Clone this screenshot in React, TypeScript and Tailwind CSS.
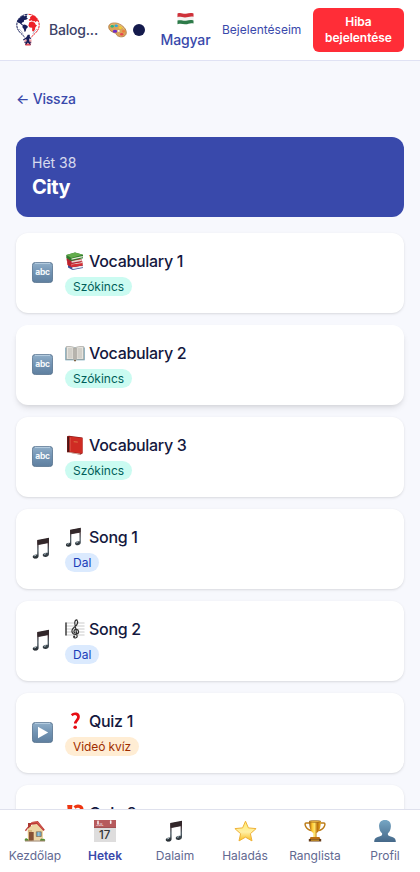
import React from "react";

type IconProps = { className?: string };

function Logo() {
  return (
    <svg className="h-[34px] w-6 shrink-0" viewBox="0 0 24 34">
      <path d="M11.500 1.300C5.500 1.500.8 6 .8 12c0 3.500 1.600 6 4.200 8.500L8.600 24" fill="none" stroke="#18205a" strokeWidth="1" strokeDasharray="2.400 .5" />
      <path d="M12.500 1.300C18.500 1.500 23.200 6 23.200 12c0 3.500-1.600 6-4.200 8.500L15.400 24" fill="none" stroke="#ed2028" strokeWidth="1" strokeDasharray="2.400 .5" />
      <path d="M3.300 5.200 6.500 2.800l2.200.4 1.100-1 1.400.5-.6 1.800 1.300 1-1.800 1.300-1.900.1-.5 2-1.600.5-.5 1.400 1.800 1.200-1.300.3-2.300-2-1.900-.7-.5-2.200Z" fill="#18205a" />
      <path d="m6.600 11.900 2.200-.5 2.400 1.300.8 1.200-1.700 1.800-.6 2.600-1.100.7-.8-3-1.400-1.700Z" fill="#18205a" />
      <path d="m14.100 4.100 2-1.600 2.200.2 2.500 2.300 1.500 3.500-1.700-.5-.7 1.200-1.600-1.300-1.300.6-1.300-1.200-2 .6-1.100-1.100 1.600-1Z" fill="#ed2028" />
      <path d="m13.300 9.200 2.700-.6 2.800 1.200 1.100 2.200 1.200.2-1.800 2.400-.5 2.500-1.700 1.700-1-1.400.1-2.700-2.500-.3-1.300-1.700Z" fill="#ed2028" />
      <path d="m3 16 2.500 2.300 1.700 3M21 16l-2.700 2.300-1.500 2.800" fill="none" stroke="#8389a7" strokeWidth=".6" />
      <path d="M8.200 26.500h7.500l-.8 6H9.300Z" fill="#f1a3aa" />
      <path d="M11.800 21.700h2v2.200l1.500 1.300-.8.7-1.300-.5v2.700l1.700 3.700-1 .3-2.200-3-1.200 2.900-1.500-.3 1.800-4.200-.7-1.400-2.700 1.400-.4-.9 3.300-2.300Z" fill="#18205a" />
      <path d="M8.300 29.300h6.900" stroke="#18205a" strokeWidth=".9" />
      <path d="M9.500 31.800h4.800" stroke="#df3443" strokeWidth="1.100" />
    </svg>
  );
}

function Palette() {
  return (
    <svg className="h-4 w-[19px] shrink-0" viewBox="0 0 19 16">
      <path d="M.7 5.200C.5 1.200 5.500.2 9.800 1.400c4.900 1.600 9 5.800 8.500 9.800-.5 3.600-5.200 4.700-8.800 2.600-1.400-.8-1-2.300-2.200-2.700C4.600 10.200.9 8.800.7 5.200Z" fill="#d9a35b" stroke="#a76e32" strokeWidth=".7" />
      <path d="M2 4.200C3.300 1.500 7 1.600 10 2.600c3 1 5 2.900 6 4.800" fill="none" stroke="#efc780" strokeWidth=".8" />
      <ellipse cx="4.200" cy="4.300" rx="1.700" ry="1.400" fill="#2bb57b" />
      <ellipse cx="8.200" cy="3.700" rx="1.700" ry="1.300" fill="#27a9dd" />
      <ellipse cx="12.200" cy="5.700" rx="1.600" ry="1.200" fill="#efd22c" />
      <ellipse cx="15.500" cy="9.300" rx="1.500" ry="1.400" fill="#f07c3e" />
      <ellipse cx="13.700" cy="12.200" rx="1.700" ry="1.200" fill="#ea4650" />
      <ellipse cx="7" cy="9.200" rx="2.300" ry="1.500" fill="#6c2bc5" />
      <ellipse cx="10.600" cy="8.900" rx="1.100" ry=".9" fill="#fff" />
    </svg>
  );
}

function Flag() {
  return (
    <svg className="h-[13px] w-[17px]" viewBox="0 0 17 13">
      <path d="M.5 1.500C4-.1 6 2.300 9 1.800c3-.7 5-1 7.500-.3v10C13 10.300 11 12.500 8 12.200c-3-.5-5-.8-7.500 0Z" fill="#f3f3f1" />
      <path d="M.5 1.500C4-.1 6 2.300 9 1.800c3-.7 5-1 7.500-.3v3.300C13 4 11 5.500 8 5.500 5 5.500 3 4.300.5 5.200Z" fill="#cf3139" />
      <path d="M.5 8.600C4 7.500 6 9.200 9 8.800c3-.7 5-1 7.500-.3v3c-3.500-1.200-5.500 1-8.500.7-3-.5-5-.8-7.500 0Z" fill="#2d7b49" />
    </svg>
  );
}

function Tile({ children }: { children: React.ReactNode }) {
  return (
    <svg className="h-[21px] w-[21px] shrink-0" viewBox="0 0 21 21">
      <defs>
        <linearGradient id="tileFill" x2="0" y2="1"><stop stopColor="#91afc9" /><stop offset=".5" stopColor="#7193b3" /><stop offset="1" stopColor="#5f7f9f" /></linearGradient>
      </defs>
      <rect x=".4" y=".4" width="20.200" height="20.200" rx="3" fill="url(#tileFill)" stroke="#4f6c88" strokeWidth=".8" />
      <path d="M3 1.400h15" stroke="#c3d8e9" strokeWidth=".8" />
      {children}
    </svg>
  );
}

function AbcIcon() {
  return <Tile><text x="10.500" y="13.300" textAnchor="middle" fill="#f4f7fa" fontFamily="Inter, sans-serif" fontSize="8.500" fontWeight="700" letterSpacing="-.3">abc</text></Tile>;
}

function PlayIcon() {
  return <Tile><path d="M6 4.800 16.200 10.500 6 16.300Z" fill="#fff" /></Tile>;
}

function NoteIcon({ className = "" }: IconProps) {
  return (
    <svg className={className} viewBox="0 0 18 22">
      <defs>
        <linearGradient id="noteFill" x2="0" y2="1"><stop stopColor="#2a2224" /><stop offset=".25" stopColor="#443236" /><stop offset=".6" stopColor="#53616a" /><stop offset="1" stopColor="#22282d" /></linearGradient>
      </defs>
      <path d="M5.200 3.100 17 .8v16.300c0 1.600-1.200 2.700-3 2.900-1.900.2-3.300-.6-3.300-1.900 0-1.700 2.200-2.800 4.900-2.300V6.300L6.600 8.100v10.800c0 1.500-1.100 2.500-2.800 2.700C2 21.800.7 21 .7 19.800c0-1.700 2-2.700 4.500-2.300Z" fill="url(#noteFill)" />
      <path d="M5.500 3.600 16.700 1.500v4L5.500 7.700Z" fill="#32272a" />
      <path d="M2 19.200c.5-.7 1.200-.9 2-.8M12 17.600c.5-.7 1.200-.9 2-.8" fill="none" stroke="#b5c7ce" strokeWidth=".9" />
    </svg>
  );
}

function Books() {
  return (
    <svg className="h-5 w-5" viewBox="0 0 20 20">
      <path d="m3 14.300 3-1.300 12 1v3L7.500 19 3 16.500Z" fill="#3c529a" />
      <path d="m7 16.300 11-1.900v1.800L7.500 18.300Z" fill="#e7e9ed" />
      <path d="m2 10.600 5-1.200 10.500 1v4L6.500 16.200 2.400 14Z" fill="#c4212a" />
      <path d="m6.500 12.800 11-1.700v2.200L6.700 15.200Z" fill="#e7dfdc" />
      <path d="m6.500 13.600 11-1.600v2.400L6.500 16.200Z" fill="#d42f35" />
      <path d="m1.400 7.500 4-1.500L16.500 8v3l-9.700 1.900L2 10.500Z" fill="#b72432" />
      <path d="m6.500 9.900 9.800-1.600v1.800l-9.600 1.700Z" fill="#e5d6cf" />
      <path d="M1.300 4 10 1.500l8 2.200v3.600L6.200 10 1.300 7Z" fill="#2e782c" />
      <path d="M1.300 4 10 1.500l8 2.200L6.300 7Z" fill="#63ac4c" />
      <path d="m6.500 7.600 11.300-2.700v1.300L6.500 8.800Z" fill="#e9edda" />
    </svg>
  );
}

function OpenBook() {
  return (
    <svg className="h-5 w-5" viewBox="0 0 20 20">
      <path d="M.3 4.500h19.400v12.800H.3Z" fill="#6ba0b4" />
      <path d="M1.300 3.600C5 3.300 8 3.600 10 5c2-1.400 5-1.700 8.700-1.400v12.900C15 16.200 12 16 10 17.200c-2-1.200-5-1-8.700-.7Z" fill="#e6e4de" stroke="#96938e" strokeWidth=".6" />
      <path d="M10 5v12.200M8.800 5v11M11.200 5v11" stroke="#85817b" strokeWidth=".7" />
      <path d="M3 6h4.500M3 8h4.500M3 10h4.500M3 12h4.500M3 14h4.500M12.500 6H17m-4.500 2H17m-4.500 2H17m-4.500 2H17m-4.500 2H17" stroke="#b2b0aa" strokeWidth=".8" />
      <path d="M9 17h2v1.200H9Z" fill="#806345" />
    </svg>
  );
}

function RedBook() {
  return (
    <svg className="h-5 w-5" viewBox="0 0 20 20">
      <path d="m2 1.200 2-.5 13.500 1.800v15.700l-2 1.500L2 17.300Z" fill="#861a19" />
      <path d="M2.500 1.800V17l2 .3V2.200Z" fill="#4b1716" />
      <path d="m4.500 1.500 13 1.500v15.400L4.500 17Z" fill="#cf2b23" />
      <path d="m3 17 12.400 1.700v.7L2.800 17.600Z" fill="#eee0ce" />
      <path d="m8.700 6 4.100.5v1.200l-4.100-.5Z" fill="#d8653d" />
      <path d="M5.200 2.500v13.800" stroke="#e46a5e" strokeWidth=".6" />
    </svg>
  );
}

function Clef() {
  return (
    <svg className="h-5 w-5" viewBox="0 0 20 20" fill="none">
      <path d="M.5 4h19M.5 7h19M.5 10h19M.5 13h19M.5 16h19" stroke="#b5b5b5" strokeWidth=".7" />
      <path d="M1 3.500v13" stroke="#333" strokeWidth="1.400" />
      <path d="M12.200 17.700 9.800 4.500C9.500 2.500 10.500.8 11.800.8c1.700 2.700.6 5-2 7-2.500 1.900-3.600 4-2.400 6.100 1.300 2.300 6.200 2 6.200-1.100 0-2.700-3.700-3.400-4.500-1.100-.4 1.200.2 2 1.100 2.300M12.200 17.300c0 2-3.200 2.300-3.500.5" stroke="#303030" strokeWidth="1.150" strokeLinecap="round" />
      <circle cx="9.200" cy="17.600" r="1" fill="#303030" />
    </svg>
  );
}

function Question() {
  return (
    <svg className="h-5 w-5" viewBox="0 0 20 20">
      <path d="M6.700 4.200C9.500 1.700 13.500 2.600 13.500 6.100c0 3-3.200 3.600-3.200 6.500" fill="none" stroke="#e60c13" strokeWidth="2.700" />
      <circle cx="10.200" cy="16.300" r="1.800" fill="#e60c13" />
    </svg>
  );
}

function ExclaimQuestion() {
  return (
    <svg className="h-5 w-5" viewBox="0 0 20 20">
      <path d="M2.200 2h5.200l-.9 10H3.200Z" fill="#ee3511" />
      <circle cx="4.800" cy="15.600" r="2" fill="#ee3511" />
      <path d="M9.500 4.500c2.700-2.200 7.400-1.500 7.400 1.700 0 2.800-3.600 3.100-3.600 6" fill="none" stroke="#ee3511" strokeWidth="3.200" />
      <circle cx="13.300" cy="15.700" r="1.900" fill="#ee3511" />
    </svg>
  );
}

function House() {
  return (
    <svg className="h-[22px] w-[22px]" viewBox="0 0 22 22">
      <path d="M4 3h3v6H4Z" fill="#a83a30" />
      <path d="M3.500 9 12 2l7 8v10.500h-15Z" fill="#edd6a5" />
      <path d="M4 10h4v10.500H4Z" fill="#d9b67e" />
      <path d="M.9 10.300 7.800 2l6-.9 7 8.700-1.300 1.100L12.800 4 6 5 2 11.200Z" fill="#bd3935" />
      <path d="m8 2.500 5-.7 6 7" fill="none" stroke="#dd7362" strokeWidth=".7" />
      <path d="M5 12h4.700v8.500H5Z" fill="#875135" />
      <path d="M12.300 11.800h5v4.700h-5Z" fill="#69a9cc" stroke="#8c7053" strokeWidth=".8" />
      <path d="M14.800 12v4.200" stroke="#d6e3dc" strokeWidth=".6" />
      <path d="M.8 20.700c-.5-2 1-3.200 2.400-2 1 .2 1.600 1 1.400 2ZM16 20.700c0-2 1.700-3 2.800-1.800 1.500-.4 2.600.6 2.400 1.800Z" fill="#568f38" />
      <path d="M1 21h20" stroke="#80613f" strokeWidth=".8" />
    </svg>
  );
}

function CalendarIcon() {
  return (
    <svg className="h-[22px] w-[22px] overflow-visible" viewBox="0 0 22 22">
      <path d="M0 0h22v22H0Z" fill="#dedddd" />
      <path d="M0 0h22v8H0Z" fill="#b65a5c" />
      <path d="M0 7.500h22" stroke="#964c4d" strokeWidth=".6" />
      <path d="M4 1.400v2M16.700 1v2.200" stroke="#f7eded" strokeWidth="1.600" strokeLinecap="round" />
      <text x="2" y="6.400" fill="#f2dada" fontFamily="Inter, sans-serif" fontSize="4" fontWeight="600">JUL</text>
      <text x="10.700" y="19.200" textAnchor="middle" fill="#363636" fontFamily="Inter, sans-serif" fontSize="11.500" fontWeight="500">17</text>
    </svg>
  );
}

function Star() {
  return (
    <svg className="h-[22px] w-[23px]" viewBox="0 0 23 22">
      <defs><linearGradient id="starFill" x2="0" y2="1"><stop stopColor="#ffeb6c" /><stop offset=".55" stopColor="#fff0a5" /><stop offset="1" stopColor="#f9bd20" /></linearGradient></defs>
      <path d="m11.500 1.200 2.900 6.700 7.700.7-5.700 5.100 1.600 7.200-6.500-3.700L5 20.900l1.600-7.200L.9 8.600l7.700-.7Z" fill="url(#starFill)" stroke="#efb238" strokeWidth="1" strokeLinejoin="round" />
    </svg>
  );
}

function Trophy() {
  return (
    <svg className="h-[22px] w-[22px]" viewBox="0 0 22 22">
      <defs><linearGradient id="trophyFill"><stop stopColor="#97540b" /><stop offset=".25" stopColor="#ffc52d" /><stop offset=".45" stopColor="#ffe56a" /><stop offset=".7" stopColor="#b9700c" /><stop offset="1" stopColor="#e8ae21" /></linearGradient></defs>
      <path d="M6 3H2C-.3 3 1.700 10 8 10.500M16 3h4c2.300 0 .3 7-6 7.500" fill="none" stroke="#bd7d19" strokeWidth="1.500" />
      <path d="M5.200 1h11.600c.2 6-1.300 10.300-4.200 12.200V17H9.400v-3.800C6.500 11.300 5 7 5.200 1Z" fill="url(#trophyFill)" />
      <ellipse cx="11" cy="1.400" rx="5.800" ry="1" fill="#e9b442" stroke="#835314" strokeWidth=".5" />
      <path d="M6.500 17h9l.8 2H5.700Z" fill="#bc7012" />
      <path d="M4.800 19h12.400v2.500H4.800Z" fill="#663c1b" />
      <path d="M7 19.600h8v1.100H7Z" fill="#d9a42d" />
    </svg>
  );
}

function Profile() {
  return (
    <svg className="h-[22px] w-[22px]" viewBox="0 0 22 22">
      <defs><linearGradient id="personFill" x2="0" y2="1"><stop stopColor="#76a6c4" /><stop offset="1" stopColor="#456889" /></linearGradient></defs>
      <path d="M11 0c4 0 6.200 2.700 5.900 6.500-.2 3.200-1.400 5.600-3 6.700v1.600c.3 1.200 2.100 1.500 4.400 2.100 2.500.7 3.600 2.200 3.500 5.100H.2c-.1-2.900 1-4.400 3.500-5.100 2.300-.6 4.100-.9 4.400-2.100v-1.600c-1.600-1.100-2.800-3.500-3-6.700C4.800 2.700 7 0 11 0Z" fill="url(#personFill)" />
    </svg>
  );
}

const badgeStyles = {
  Szókincs: "bg-[#cbfbf1] text-[#005f5a]",
  Dal: "bg-[#dbeafe] text-[#193cb8]",
  "Videó kvíz": "bg-[#ffedd4] text-[#9f2d00] tracking-[-0.1px]",
};

type Activity = {
  title: string;
  badge: keyof typeof badgeStyles;
  icon: React.ReactNode;
  mark: React.ReactNode;
  raised?: boolean;
};

const bigNote = <NoteIcon className="mr-[3px] h-[22px] w-[18px] shrink-0" />;

const activities: Activity[] = [
  { title: "Vocabulary 1", badge: "Szókincs", icon: <AbcIcon />, mark: <Books /> },
  { title: "Vocabulary 2", badge: "Szókincs", icon: <AbcIcon />, mark: <OpenBook />, raised: true },
  { title: "Vocabulary 3", badge: "Szókincs", icon: <AbcIcon />, mark: <RedBook /> },
  { title: "Song 1", badge: "Dal", icon: bigNote, mark: <NoteIcon className="mr-[3px] h-5 w-[17px]" /> },
  { title: "Song 2", badge: "Dal", icon: bigNote, mark: <Clef /> },
  { title: "Quiz 1", badge: "Videó kvíz", icon: <PlayIcon />, mark: <Question /> },
  { title: "Quiz 2", badge: "Videó kvíz", icon: <PlayIcon />, mark: <ExclaimQuestion /> },
];

function ActivityCard({ item }: { item: Activity }) {
  return (
    <article className={`flex h-20 shrink-0 items-center gap-3 rounded-xl bg-white px-4 pb-0.5 ${item.raised ? "shadow-[0_4px_6px_-1px_rgba(0,0,0,0.1),0_2px_4px_-2px_rgba(0,0,0,0.1)]" : "shadow-[0_1px_3px_rgba(0,0,0,0.1),0_1px_2px_-1px_rgba(0,0,0,0.1)]"}`}>
      {item.icon}
      <div className="flex flex-col items-start gap-1">
        <h2 className="flex h-6 items-center gap-1 text-base font-medium tracking-[-0.3px] text-[#14183e]">
          {item.mark}
          {item.title}
        </h2>
        <span className={`h-[19px] rounded-full px-2 text-xs leading-[19px] ${badgeStyles[item.badge]}`}>{item.badge}</span>
      </div>
    </article>
  );
}

const tabs = [
  { label: "Kezdőlap", icon: <House /> },
  { label: "Hetek", icon: <CalendarIcon />, active: true },
  { label: "Dalaim", icon: <NoteIcon className="mr-0.5 h-[22px] w-[18px]" /> },
  { label: "Haladás", icon: <Star /> },
  { label: "Ranglista", icon: <Trophy /> },
  { label: "Profil", icon: <Profile /> },
];

export default function App() {
  return (
    <div className="flex h-[872px] w-[420px] flex-col overflow-hidden bg-[#f7f8fd] font-['Inter',sans-serif]">
      <header className="flex h-[61px] shrink-0 items-center border-b border-[#e0e2f4] bg-white px-4">
        <Logo />
        <span className="ml-[9px] w-[59px] shrink-0 text-sm font-medium tracking-[-0.2px] text-[#3c4268]">Balog...</span>
        <Palette />
        <span className="ml-1.5 h-3 w-3 shrink-0 rounded-full bg-[#141a4c]" />
        <button className="ml-4 flex w-[49px] shrink-0 flex-col items-center pt-0.5 text-sm font-medium tracking-[-0.15px] text-[#3949ab]">
          <Flag />
          <span className="mt-[5px] leading-5">Magyar</span>
        </button>
        <button className="ml-3 w-[79px] shrink-0 text-xs text-[#3949ab]">Bejelentéseim</button>
        <button className="ml-3 h-11 w-[91px] shrink-0 rounded-md bg-[#ff2d37] px-3 text-xs leading-4 font-semibold tracking-[-0.05px] text-white">Hiba bejelentése</button>
      </header>
      <main className="flex min-h-0 flex-1 flex-col overflow-hidden px-4 pt-7">
        <button className="flex h-5 shrink-0 items-center self-start text-sm font-medium tracking-[-0.2px] text-[#3949ab]">← Vissza</button>
        <section className="mt-7 h-20 shrink-0 rounded-xl bg-[#3949ab] p-4 text-white">
          <p className="text-sm leading-5 text-white/80">Hét 38</p>
          <h1 className="text-xl leading-7 font-bold tracking-[-0.5px]">City</h1>
        </section>
        <div className="mt-4 flex flex-col gap-3">
          {activities.map((item) => <ActivityCard key={item.title} item={item} />)}
        </div>
      </main>
      <nav className="grid h-[63px] shrink-0 grid-cols-6 border-t border-[#dfe1ed] bg-white pt-2.5">
        {tabs.map((tab) => (
          <button key={tab.label} className={`flex flex-col items-center gap-1.5 text-xs leading-4 ${tab.active ? "font-semibold text-[#3949ab]" : "text-[#626991]"}`}>
            {tab.icon}
            <span>{tab.label}</span>
          </button>
        ))}
      </nav>
    </div>
  );
}
